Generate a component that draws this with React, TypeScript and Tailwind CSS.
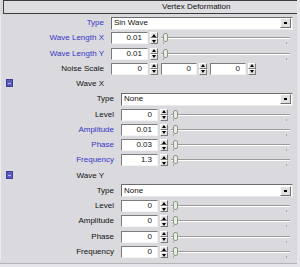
import React from 'react';

const FONT = { fontFamily: '"Liberation Sans", Arial, sans-serif' };

function Spinner() {
  return (
    <div className="flex flex-col w-[8px] h-[12px]">
      <div className="flex-1 flex items-center justify-center bg-[#e4e4e4] border border-t-white border-l-white border-b-[#7a7a7a] border-r-[#7a7a7a]">
        <div className="w-0 h-0 border-l-[2px] border-r-[2px] border-b-[3px] border-l-transparent border-r-transparent border-b-black" />
      </div>
      <div className="flex-1 flex items-center justify-center bg-[#e4e4e4] border border-t-white border-l-white border-b-[#7a7a7a] border-r-[#7a7a7a]">
        <div className="w-0 h-0 border-l-[2px] border-r-[2px] border-t-[3px] border-l-transparent border-r-transparent border-t-black" />
      </div>
    </div>
  );
}

function NumBox({ value, w = 'w-[37px]' }: { value: string; w?: string }) {
  return (
    <div className={`${w} h-[12px] bg-white border border-t-[#7c7c7c] border-l-[#7c7c7c] border-b-[#f4f4f4] border-r-[#f4f4f4] flex items-center justify-end pr-[5px] text-[8px] leading-none text-[#111]`}>
      {value}
    </div>
  );
}

function Slider() {
  return (
    <div className="relative flex-1 h-[12px] ml-[3px] mr-[3px]">
      <div className="absolute left-0 right-0 top-[5px] h-[1px] bg-[#9a9a9a]" />
      <div className="absolute left-0 right-0 top-[6px] h-[1px] bg-white" />
      <div className="absolute left-[2px] top-[10px] w-[1px] h-[2px] bg-[#a8a8a8]" />
      <div className="absolute right-[3px] top-[10px] w-[1px] h-[2px] bg-[#a8a8a8]" />
      <div className="absolute left-[2px] top-[1px] w-[5px] h-[9px] rounded-[2px] bg-[#e8ece4] border border-[#8a9a84]" />
    </div>
  );
}

function Select({ value }: { value: string }) {
  return (
    <div className="flex-1 h-[13px] bg-white border border-t-[#6c6c6c] border-l-[#6c6c6c] border-b-[#e8e8e8] border-r-[#e8e8e8] flex items-center">
      <div className="flex-1 pl-[2px] text-[8px] leading-none text-[#111]">{value}</div>
      <div className="w-[11px] h-[10px] mr-[1px] bg-[#e0e0e0] border border-t-white border-l-white border-b-[#707070] border-r-[#707070] flex items-center justify-center">
        <div className="w-[3px] h-[2px] bg-black" />
      </div>
    </div>
  );
}

type RowProps = {
  label: string;
  blue?: boolean;
  indent?: boolean;
  children?: React.ReactNode;
};

function Row({ label, blue, indent, children }: RowProps) {
  return (
    <div className="h-[15.27px] flex items-center pr-[4px]">
      <div
        className={`${indent ? 'w-[113px]' : 'w-[103px]'} shrink-0 text-right text-[8px] leading-none ${blue ? 'text-[#3636c6]' : 'text-[#111]'}`}
      >
        {label}
      </div>
      <div className="flex-1 flex items-center ml-[7px]">{children}</div>
    </div>
  );
}

function ValueRow({ label, value, blue, indent }: { label: string; value: string; blue?: boolean; indent?: boolean }) {
  return (
    <Row label={label} blue={blue} indent={indent}>
      <NumBox value={value} />
      <div className="ml-[2px]">
        <Spinner />
      </div>
      <Slider />
    </Row>
  );
}

function GroupHeader({ label }: { label: string }) {
  return (
    <div className="h-[15.27px] flex items-center relative">
      <div className="absolute left-[5px] top-[3px] w-[7px] h-[8px] bg-[#5a5cbc] border border-[#3c3c9c] flex items-center justify-center">
        <div className="w-[3px] h-[1px] bg-[#b8b8ee]" />
      </div>
      <div className="w-[103px] text-right text-[8px] leading-none text-[#111]">{label}</div>
    </div>
  );
}

export default function App() {
  return (
    <div className="w-[300px] h-[267px] bg-[#e6e6ea] overflow-hidden" style={FONT}>
      <div className="w-[297px] h-[264px] bg-[#dadade] border-b border-[#b4b4b8] flex flex-col">
        <div className="ml-[3px] h-[14px] border border-r-0 border-[#3c3c3c] bg-[#dedee2] flex items-center pl-[158px] text-[8px] leading-none text-[#111]">
          Vertex Deformation
        </div>
        <div className="flex flex-col mt-[1.4px] border-l border-[#ececf0]">
          <Row label="Type" blue>
            <Select value="Sin Wave" />
          </Row>
          <ValueRow label="Wave Length X" value="0.01" blue />
          <ValueRow label="Wave Length Y" value="0.01" blue />
          <Row label="Noise Scale">
            <NumBox value="0" />
            <div className="ml-[2px]"><Spinner /></div>
            <div className="ml-[3px]"><NumBox value="0" w="w-[36px]" /></div>
            <div className="ml-[2px]"><Spinner /></div>
            <div className="ml-[3px]"><NumBox value="0" w="w-[36px]" /></div>
            <div className="ml-[2px]"><Spinner /></div>
          </Row>
          <GroupHeader label="Wave X" />
          <Row label="Type" indent>
            <Select value="None" />
          </Row>
          <ValueRow label="Level" value="0" indent />
          <ValueRow label="Amplitude" value="0.01" blue indent />
          <ValueRow label="Phase" value="0.03" blue indent />
          <ValueRow label="Frequency" value="1.3" blue indent />
          <GroupHeader label="Wave Y" />
          <Row label="Type" indent>
            <Select value="None" />
          </Row>
          <ValueRow label="Level" value="0" indent />
          <ValueRow label="Amplitude" value="0" indent />
          <ValueRow label="Phase" value="0" indent />
          <ValueRow label="Frequency" value="0" indent />
        </div>
      </div>
    </div>
  );
}
